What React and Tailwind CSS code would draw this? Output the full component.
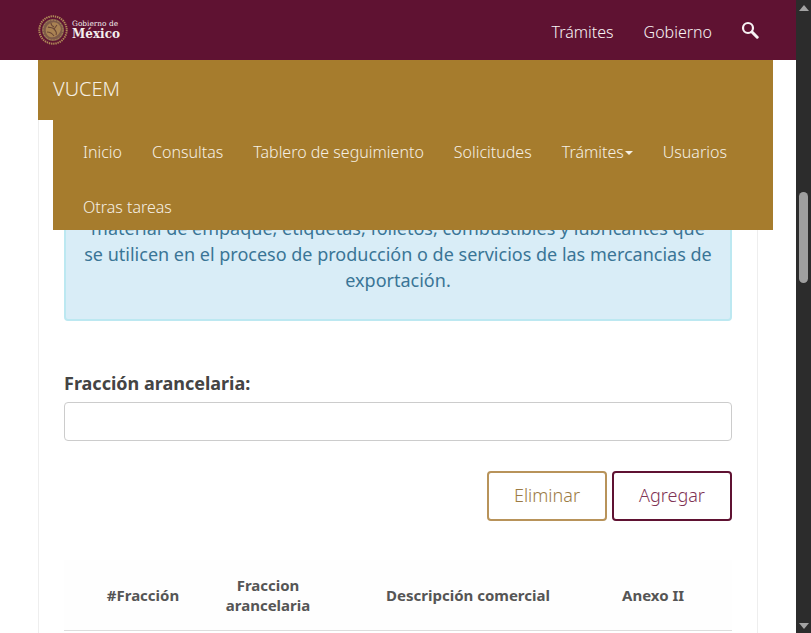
import React from 'react';

const font = "font-['Noto_Sans','Open_Sans',sans-serif]";

function Logo() {
  return (
    <div className="flex items-center gap-[4px]">
      <svg width="30" height="30" viewBox="0 0 30 30" fill="none">
        <circle cx="15" cy="15" r="13.7" stroke="#b08a58" strokeWidth="2" strokeDasharray="1.4 0.8" />
        <circle cx="15" cy="15" r="11" fill="#7d5a48" />
        <circle cx="15" cy="15" r="10" stroke="#b8925f" strokeWidth="0.8" strokeDasharray="2 1" />
        <path d="M8 13c2-5 7-7 11-5 3 2 5 5 3 9-2 4-6 6-10 5-3-1-5-5-4-9z" fill="#a98253" />
        <path d="M10 12c2 1 4 0 6 2s3 4 2 6M9 17c3 0 5 1 7 4M13 8c0 2 1 3 3 4M19 10l-3 4" stroke="#6a4636" strokeWidth="1.1" />
      </svg>
      <div className="flex flex-col font-['DejaVu_Serif','Liberation_Serif',serif] text-[#f3eeee]">
        <span className="text-[7.4px] leading-[9px]">Gobierno de</span>
        <span className="text-[12px] leading-[13px] font-bold">México</span>
      </div>
    </div>
  );
}

function Navbar() {
  const links = ['Inicio', 'Consultas', 'Tablero de seguimiento', 'Solicitudes'];
  return (
    <div className={`absolute top-[60px] left-[38px] w-[735px] text-[#f5efe3] ${font}`}>
      <div className="h-[60px] bg-[#a67c2d] flex items-center pl-[15px] pb-[2px] text-[20px] font-light">VUCEM</div>
      <nav className="ml-[15px] h-[110px] bg-[#a67c2d] px-[30px] pt-[4px] text-[16px] font-light">
        <div className="h-[55px] flex items-center gap-[30px]">
          {links.map((l) => (
            <a key={l}>{l}</a>
          ))}
          <a className="flex items-center">
            Trámites
            <span className="ml-[1px] mt-[2px] border-x-[4px] border-t-[4px] border-x-transparent border-t-[#f5efe3]" />
          </a>
          <a>Usuarios</a>
        </div>
        <div className="h-[55px] flex items-center">
          <a>Otras tareas</a>
        </div>
      </nav>
    </div>
  );
}

function Scrollbar() {
  return (
    <div className="w-[15px] h-full bg-[#2c2c2c] flex flex-col items-center">
      <span className="mt-[5px] border-x-[5px] border-b-[6px] border-x-transparent border-b-[#a3a3a3]" />
      <div className="mt-[181px] w-[9px] h-[91px] rounded-[5px] bg-[#9f9f9f]" />
      <span className="mt-auto mb-[4px] border-x-[5px] border-t-[6px] border-x-transparent border-t-[#a3a3a3]" />
    </div>
  );
}

export default function App() {
  return (
    <div className={`h-[633px] w-[811px] flex overflow-hidden bg-white ${font}`}>
      <div className="relative w-[796px] h-full overflow-hidden">
        {/* Header */}
        <header className="h-[60px] bg-[#5f1232] flex items-center justify-between pl-[38px] pr-[37px] text-[#f8f2f4]">
          <Logo />
          <div className="flex items-center gap-[30px] text-[16px] font-light pt-[4px]">
            <a>Trámites</a>
            <a className="-mr-[1px]">Gobierno</a>
            <svg width="18" height="18" viewBox="0 0 18 18" fill="none" stroke="currentColor" className="-mt-[5px]">
              <circle cx="7" cy="7" r="5" strokeWidth="2.2" />
              <path d="M11 11l5.2 5.2" strokeWidth="3" strokeLinecap="round" />
            </svg>
          </div>
        </header>

        {/* Content */}
        <main className="ml-[38px] w-[720px] h-[573px] border-x border-[#eeeeee] px-[25px] pt-[130px]">
          <div className="h-[131px] bg-[#d9edf7] border-2 border-[#bce8f1] rounded-[4px] pt-[23px] text-center text-[18px] leading-[26px] text-[#3a7596]">
            <p>material de empaque, etiquetas, folletos, combustibles y lubricantes que</p>
            <p>se utilicen en el proceso de producción o de servicios de las mercancias de</p>
            <p>exportación.</p>
          </div>

          <label className="block mt-[49px] mb-[6px] text-[18px] leading-[26px] font-bold text-[#444444]">Fracción arancelaria:</label>
          <input className="block w-full h-[39px] bg-white border border-[#cccccc] rounded-[4px]" />

          <div className="mt-[30px] flex justify-end gap-[5px]">
            <button className="w-[120px] h-[50px] pb-[2px] border-2 border-[#b8935a] rounded-[4px] text-[18px] font-light text-[#9c7b45]">Eliminar</button>
            <button className="w-[120px] h-[50px] pb-[2px] border-2 border-[#5f1232] rounded-[4px] text-[18px] font-light text-[#7f3355]">Agregar</button>
          </div>

          <div className="mt-[39px] h-[71px] grid grid-cols-[158px_92px_308px_62px] items-center border-b border-[#dddddd] bg-[#fefefe] text-center text-[15px] leading-[20px] font-bold text-[#555555]">
            <div>#Fracción</div>
            <div>Fraccion arancelaria</div>
            <div>Descripción comercial</div>
            <div className="whitespace-nowrap">Anexo II</div>
          </div>
        </main>

        <Navbar />
      </div>
      <Scrollbar />
    </div>
  );
}
